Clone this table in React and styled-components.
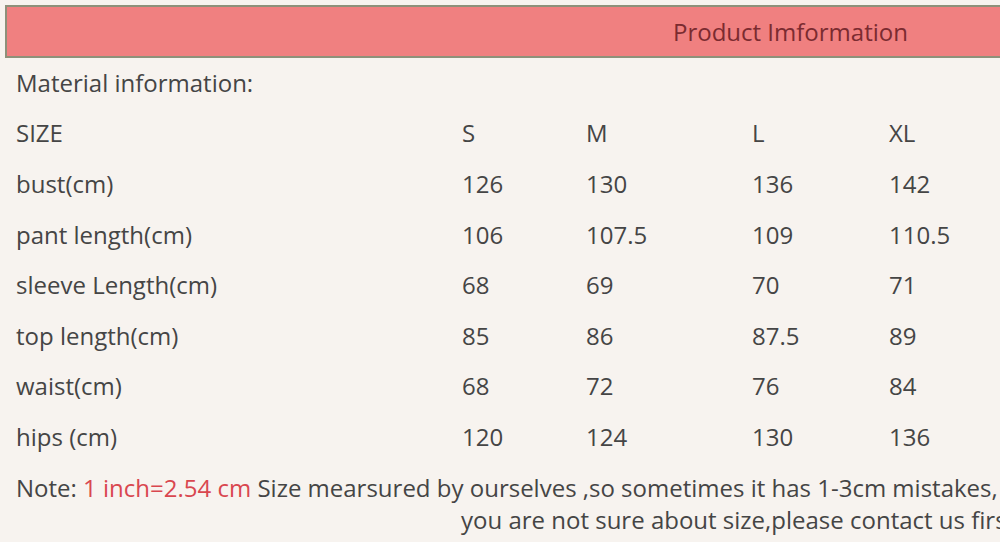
import React from "react";
import styled, { createGlobalStyle } from "styled-components";

const Global = createGlobalStyle`
  html, body { margin: 0; padding: 0; background: #f7f3ef; overflow: hidden; }
  body { width: 1000px; height: 542px; }
`;

const Page = styled.div`
  width: 1000px;
  height: 542px;
  overflow: hidden;
  background: #f7f3ef;
  font-family: "Open Sans", "Noto Sans", sans-serif;
  color: #454545;
  padding-top: 5px;
  box-sizing: border-box;
`;

const Header = styled.div`
  margin-left: 5px;
  width: 1100px;
  height: 53px;
  box-sizing: border-box;
  border: 2px solid #8e917a;
  background: #f08080;
  display: flex;
  align-items: center;
  padding-left: 666px;
  padding-bottom: 1px;
  font-size: 24px;
  color: #7b2b30;
`;

const Table = styled.div`
  display: grid;
  grid-template-columns: 446px 124px 166px 137px 1fr;
  grid-auto-rows: 50.6px;
  padding-left: 16px;
  margin-top: -1px;
  font-size: 24px;
`;

const Cell = styled.div`
  display: flex;
  align-items: center;
  white-space: nowrap;
  grid-column: ${(p) => (p.$span ? "1 / -1" : "auto")};
`;

const Note = styled.div`
  font-size: 24px;
  white-space: nowrap;
  padding-left: 16px;
  margin-top: 10px;
  line-height: 32px;
`;

const Red = styled.span`
  color: #d9474f;
`;

const Second = styled.div`
  padding-left: 445px;
`;

const rows = [
  ["SIZE", "S", "M", "L", "XL"],
  ["bust(cm)", "126", "130", "136", "142"],
  ["pant length(cm)", "106", "107.5", "109", "110.5"],
  ["sleeve Length(cm)", "68", "69", "70", "71"],
  ["top length(cm)", "85", "86", "87.5", "89"],
  ["waist(cm)", "68", "72", "76", "84"],
  ["hips (cm)", "120", "124", "130", "136"],
];

export default function App() {
  return (
    <Page>
      <Global />
      <Header>Product Imformation</Header>
      <Table>
        <Cell $span>Material information:</Cell>
        {rows.map((r, i) =>
          r.map((c, j) => <Cell key={i + "-" + j}>{c}</Cell>)
        )}
      </Table>
      <Note>
        <div>
          Note: <Red>1 inch=2.54 cm</Red> Size mearsured by ourselves ,so sometimes it has 1-3cm mistakes, if
        </div>
        <Second>you are not sure about size,please contact us first.</Second>
      </Note>
    </Page>
  );
}
